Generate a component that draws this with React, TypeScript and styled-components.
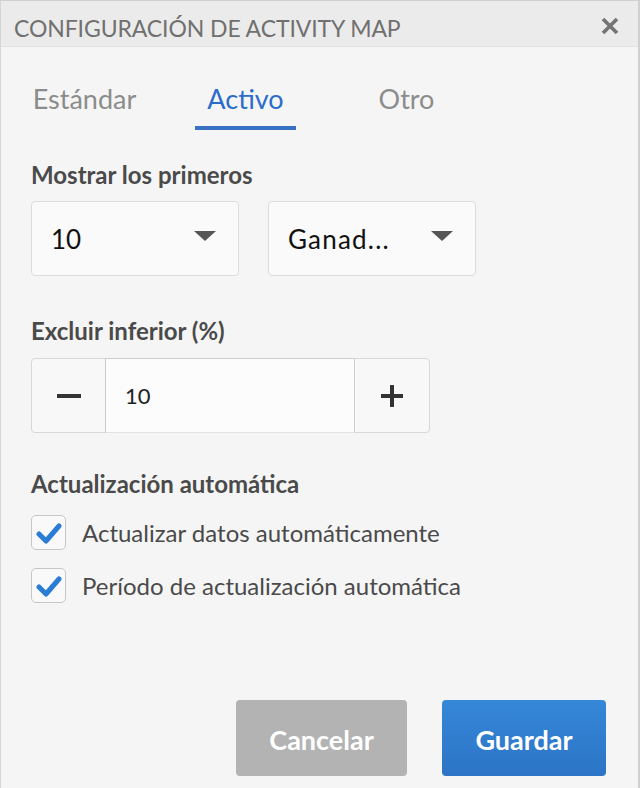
import React from "react";
import styled, { createGlobalStyle } from "styled-components";

const Global = createGlobalStyle`
  html, body { margin: 0; padding: 0; background: #f5f5f5; }
  * { box-sizing: border-box; }
`;

const font = `"Lato", "Open Sans", sans-serif`;

const Dialog = styled.div`
  width: 640px;
  height: 788px;
  display: flex;
  flex-direction: column;
  background: #f5f5f5;
  border-left: 1px solid #d6d6d6;
  border-right: 2px solid #d0d0d0;
  border-top: 1px solid #d0d0d0;
  font-family: ${font};
`;

const Header = styled.div`
  height: 46px;
  flex: none;
  display: flex;
  align-items: center;
  justify-content: space-between;
  padding: 0 18px 0 13px;
  background: #ebebeb;
  border-bottom: 1px solid #e2e2e2;
`;

const Title = styled.div`
  font-size: 23px;
  color: #707070;
  letter-spacing: -0.1px;
  padding-top: 8px;
`;

const Close = styled.button`
  border: none;
  background: none;
  padding: 0;
  margin-top: 5px;
  width: 20px;
  height: 20px;
  display: flex;
  align-items: center;
  justify-content: center;
  cursor: pointer;
`;

const Body = styled.div`
  padding: 0 30px;
  display: flex;
  flex-direction: column;
`;

const Tabs = styled.div`
  display: grid;
  grid-template-columns: repeat(3, 161px);
  margin: 33px 0 0 -27px;
`;

const TabCell = styled.div`
  display: flex;
  justify-content: center;
`;

const Tab = styled.div<{ $active?: boolean }>`
  padding: 0 12px 9px;
  font-size: 27px;
  line-height: 37px;
  color: ${(p) => (p.$active ? "#2c6ccb" : "#8c8c8c")};
  border-bottom: 4px solid ${(p) => (p.$active ? "#3a72c6" : "transparent")};
`;

const Label = styled.div<{ $top: number }>`
  margin-top: ${(p) => p.$top}px;
  font-size: 24px;
  font-weight: 700;
  color: #4a4a4a;
  line-height: 28px;
`;

const SelectRow = styled.div`
  display: flex;
  gap: 29px;
  margin-top: 12px;
`;

const Select = styled.div`
  width: 208px;
  height: 75px;
  border: 1px solid #dcdcdc;
  border-radius: 4px;
  background: #fafafa;
  display: flex;
  align-items: center;
  justify-content: space-between;
  padding: 0 22px 0 19px;
  font-size: 26px;
  color: #111;
`;

const SelectText = styled.span<{ $spread?: boolean }>`
  letter-spacing: ${(p) => (p.$spread ? "1.2px" : "0")};
`;

const Caret = styled.span`
  width: 0;
  height: 0;
  border-left: 11px solid transparent;
  border-right: 11px solid transparent;
  border-top: 10px solid #555;
  margin-bottom: 6px;
`;

const Stepper = styled.div`
  margin-top: 13px;
  width: 399px;
  height: 75px;
  display: grid;
  grid-template-columns: 73px 1fr 74px;
  border: 1px solid #d8d8d8;
  border-radius: 4px;
  background: #f8f8f8;
`;

const StepBtn = styled.div`
  display: flex;
  align-items: center;
  justify-content: center;
`;

const StepInput = styled.div`
  background: #fcfcfc;
  border-left: 1px solid #c8c8c8;
  border-right: 1px solid #cfcfcf;
  border-top: 1px solid #cfcfcf;
  border-bottom: 1px solid #e3e3e3;
  margin: -1px 0;
  display: flex;
  align-items: center;
  padding-left: 19px;
  font-size: 22px;
  color: #222;
`;

const CheckList = styled.div`
  display: flex;
  flex-direction: column;
  gap: 18px;
  margin-top: 17px;
`;

const CheckRow = styled.label`
  display: flex;
  align-items: center;
  gap: 16px;
  font-size: 24px;
  color: #4a4a4a;
`;

const Box = styled.span`
  width: 35px;
  height: 35px;
  flex: none;
  border: 1px solid #c6c6c6;
  border-radius: 5px;
  background: #f9f9f9;
  display: flex;
  align-items: center;
  justify-content: center;
`;

const Footer = styled.div`
  margin-top: auto;
  display: flex;
  justify-content: flex-end;
  gap: 35px;
  padding: 0 32px 12px 0;
`;

const Button = styled.button<{ $primary?: boolean }>`
  height: 76px;
  width: ${(p) => (p.$primary ? "164px" : "171px")};
  border: none;
  border-radius: 4px;
  font-family: ${font};
  font-size: 27px;
  font-weight: 700;
  color: #fff;
  padding-top: 4px;
  background: ${(p) =>
    p.$primary ? "linear-gradient(#3587d8, #2c74c6)" : "#b3b3b3"};
  cursor: pointer;
`;

const Check = () => (
  <svg width="26" height="22" viewBox="0 0 26 22">
    <path d="M3 12 L10 19 L23 4" fill="none" stroke="#2b7cd4" strokeWidth="5" strokeLinecap="round" strokeLinejoin="round" />
  </svg>
);

export default function App() {
  return (
    <>
      <Global />
      <Dialog>
        <Header>
          <Title>CONFIGURACIÓN DE ACTIVITY MAP</Title>
          <Close aria-label="Cerrar">
            <svg width="18" height="18" viewBox="0 0 18 18">
              <path d="M2 2 L16 16 M16 2 L2 16" stroke="#747474" strokeWidth="3.6" />
            </svg>
          </Close>
        </Header>
        <Body>
          <Tabs>
            <TabCell><Tab>Estándar</Tab></TabCell>
            <TabCell><Tab $active>Activo</Tab></TabCell>
            <TabCell><Tab>Otro</Tab></TabCell>
          </Tabs>
          <Label $top={31}>Mostrar los primeros</Label>
          <SelectRow>
            <Select><SelectText>10</SelectText><Caret /></Select>
            <Select><SelectText $spread>Ganad...</SelectText><Caret /></Select>
          </SelectRow>
          <Label $top={41}>Excluir inferior (%)</Label>
          <Stepper>
            <StepBtn>
              <svg width="24" height="4" viewBox="0 0 24 4"><rect width="24" height="4" fill="#333" /></svg>
            </StepBtn>
            <StepInput>10</StepInput>
            <StepBtn>
              <svg width="24" height="24" viewBox="0 0 24 24"><path d="M12 1 V23 M1 12 H23" stroke="#333" strokeWidth="4" /></svg>
            </StepBtn>
          </Stepper>
          <Label $top={37}>Actualización automática</Label>
          <CheckList>
            <CheckRow><Box><Check /></Box>Actualizar datos automáticamente</CheckRow>
            <CheckRow><Box><Check /></Box>Período de actualización automática</CheckRow>
          </CheckList>
        </Body>
        <Footer>
          <Button>Cancelar</Button>
          <Button $primary>Guardar</Button>
        </Footer>
      </Dialog>
    </>
  );
}
